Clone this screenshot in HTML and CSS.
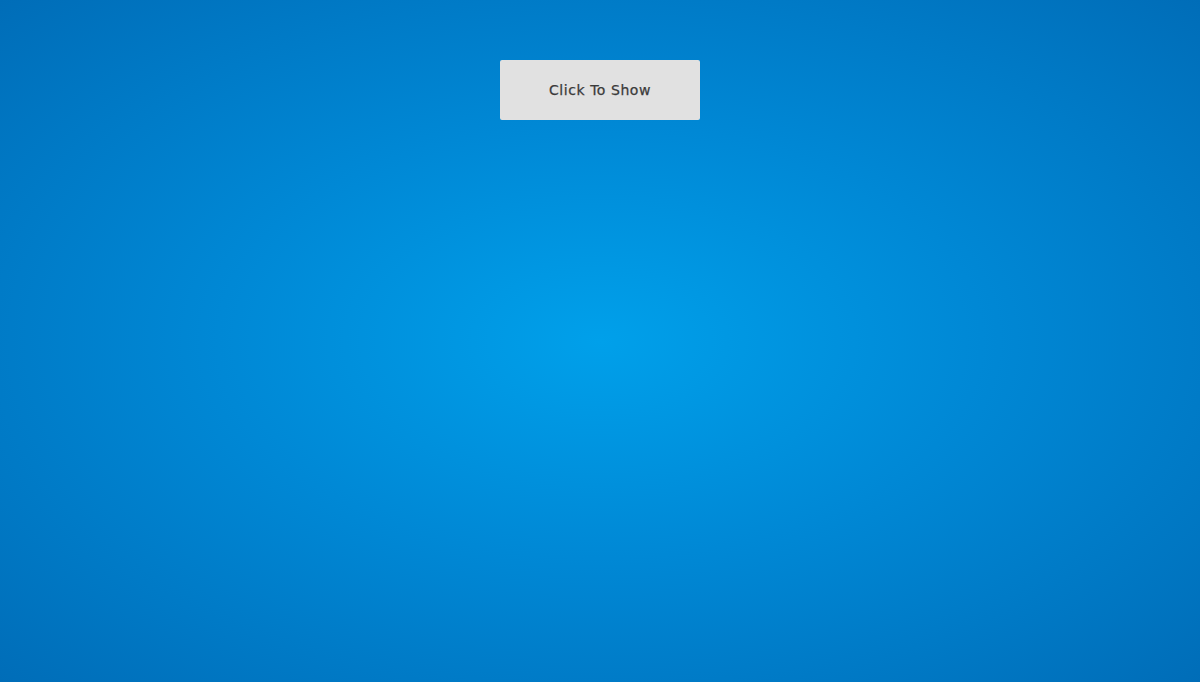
FILE: index.html
```html
<!DOCTYPE html>
<html lang="en">
<head>
<meta charset="utf-8">
<title>Click To Show</title>
<link rel="stylesheet" href="styles.css">
</head>
<body>
<main class="stage">
  <button class="show-btn" type="button">Click To Show</button>
</main>
</body>
</html>
```
FILE: styles.css
```css
html, body {
  margin: 0;
  height: 100%;
}
body {
  background: radial-gradient(ellipse at 50% 50%, #00a0ea 0%, #0088d5 45%, #006db8 100%);
  font-family: "DejaVu Sans", sans-serif;
}
.stage {
  display: flex;
  justify-content: center;
  padding-top: 60px;
}
.show-btn {
  width: 200px;
  height: 60px;
  border: none;
  border-radius: 2px;
  background: #e1e1e1;
  color: #3a3a3a;
  font-family: "DejaVu Sans", sans-serif;
  font-size: 14px;
  font-weight: 400;
  letter-spacing: 0.55px;
  -webkit-text-stroke: 0.25px #3a3a3a;
  cursor: pointer;
}
```
